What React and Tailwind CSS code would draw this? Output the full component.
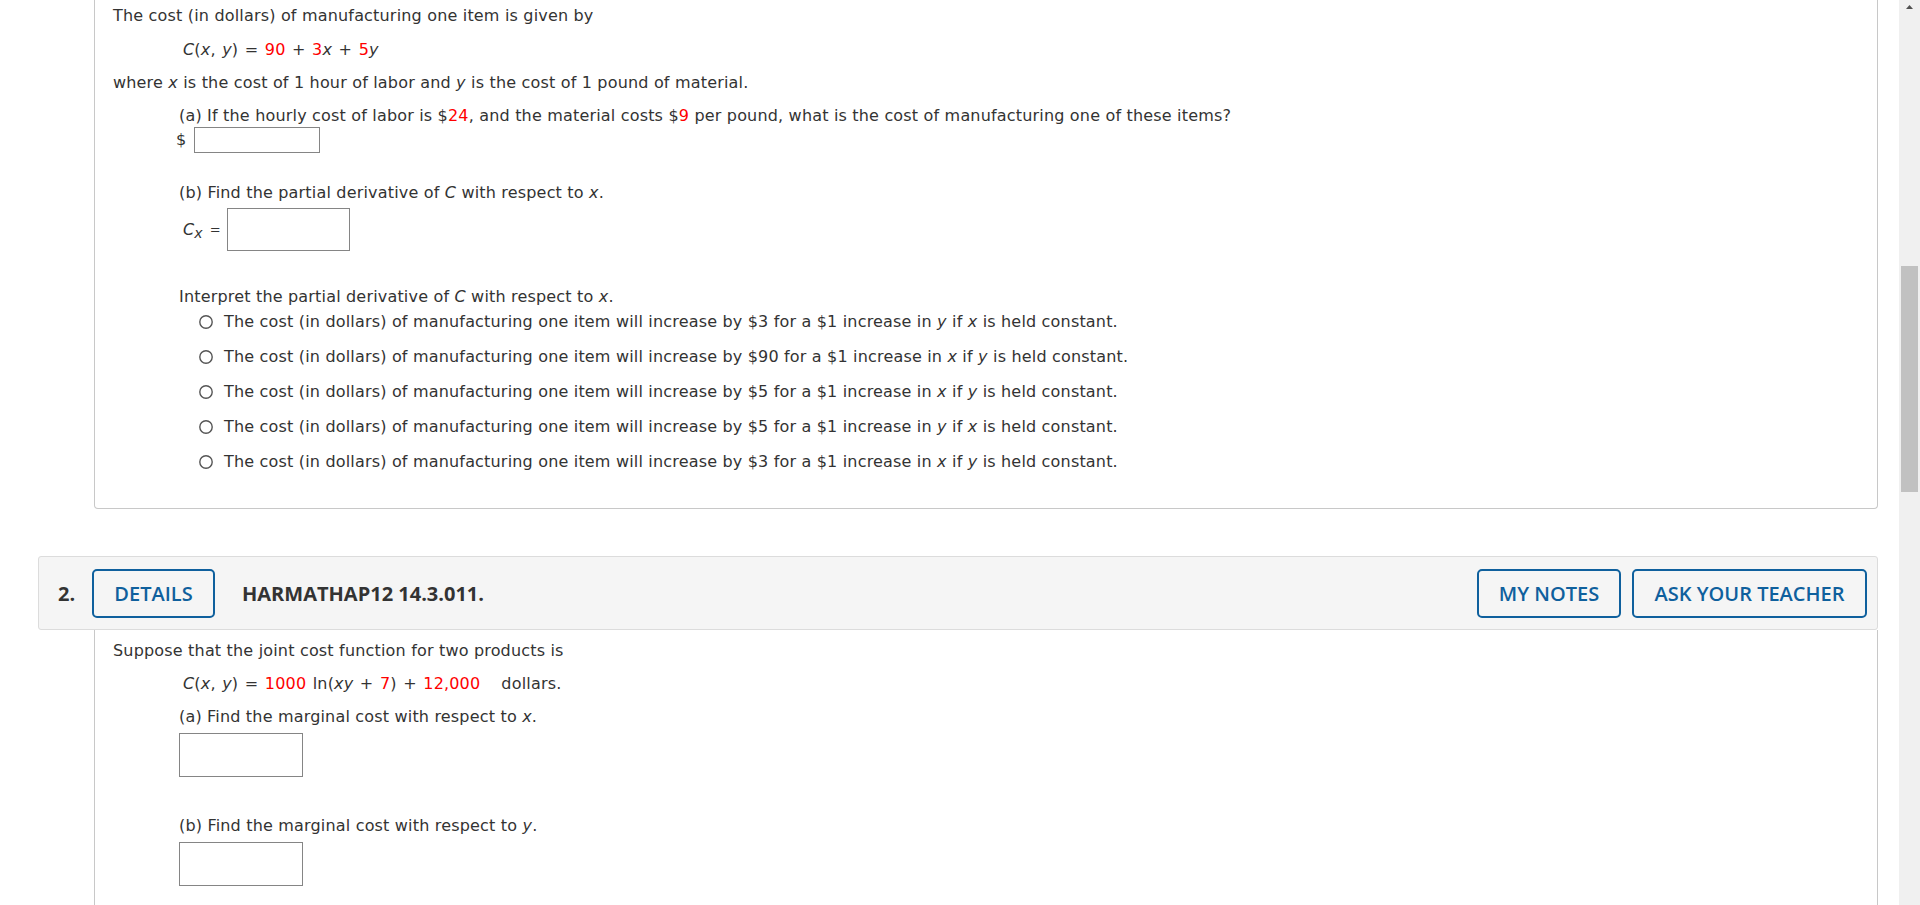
import React from "react";

const R = ({ children }) => <span className="text-[#ff0000]">{children}</span>;
const I = ({ children }) => <i className="italic">{children}</i>;

function Radio() {
  return (
    <svg width="14" height="14" viewBox="0 0 14 14" className="shrink-0">
      <circle cx="7" cy="7" r="6.2" fill="#fff" stroke="#555" strokeWidth="1.4" />
    </svg>
  );
}

function Option({ children }) {
  return (
    <div className="ml-[86px] flex items-center gap-[11px] leading-5 h-5">
      <Radio />
      <span>{children}</span>
    </div>
  );
}

function Btn({ w, children }) {
  return (
    <div
      className={`flex h-[49px] items-center justify-center rounded-[5px] border-2 border-[#0f609d] bg-transparent text-[20px] font-semibold text-[#0f609d] ${w}`}
    >
      {children}
    </div>
  );
}

export default function App() {
  return (
    <div className="flex h-[905px] w-[1920px] overflow-hidden bg-white font-['DejaVu_Sans',sans-serif] text-[16px] text-[#333]">
      <div className="flex-1 pl-[38px] pr-[21px]">
        {/* Question 1 body */}
        <div className="ml-[56px] rounded-b-[4px] border-x border-b border-[#c8c8c8] pl-[18px] pt-[6px] pb-[36px] leading-5 tracking-[0.18px]">
          <div>The cost (in dollars) of manufacturing one item is given by</div>
          <div className="mt-[14px] ml-[70px] [word-spacing:1.2px]">
            <I>C</I>(<I>x</I>, <I>y</I>) = <R>90</R> + <R>3</R><I>x</I> + <R>5</R><I>y</I>
          </div>
          <div className="mt-[13px]">
            where <I>x</I> is the cost of 1 hour of labor and <I>y</I> is the cost of 1 pound of material.
          </div>
          <div className="mt-[13px] ml-[66px]">
            (a) If the hourly cost of labor is $<R>24</R>, and the material costs $<R>9</R> per pound, what is the cost of manufacturing one of these items?
          </div>
          <div className="mt-[1px] ml-[63px] flex h-[26px] items-center">
            <span>$</span>
            <div className="ml-[8px] h-[26px] w-[126px] border border-[#858585] bg-white" />
          </div>
          <div className="mt-[30px] ml-[66px]">
            (b) Find the partial derivative of <I>C</I> with respect to <I>x</I>.
          </div>
          <div className="mt-[5px] ml-[70px] flex h-[43px] items-center">
            <span>
              <I>C</I>
              <sub className="text-[14px] italic">x</sub>
            </span>
            <span className="ml-[7px] text-[13px]">=</span>
            <div className="ml-[6px] h-[43px] w-[123px] border border-[#858585] bg-white" />
          </div>
          <div className="mt-[36px] ml-[66px]">
            Interpret the partial derivative of <I>C</I> with respect to <I>x</I>.
          </div>
          <div className="mt-[5px] flex flex-col gap-[15px]">
            <Option>
              The cost (in dollars) of manufacturing one item will increase by $3 for a $1 increase in <I>y</I> if <I>x</I> is held constant.
            </Option>
            <Option>
              The cost (in dollars) of manufacturing one item will increase by $90 for a $1 increase in <I>x</I> if <I>y</I> is held constant.
            </Option>
            <Option>
              The cost (in dollars) of manufacturing one item will increase by $5 for a $1 increase in <I>x</I> if <I>y</I> is held constant.
            </Option>
            <Option>
              The cost (in dollars) of manufacturing one item will increase by $5 for a $1 increase in <I>y</I> if <I>x</I> is held constant.
            </Option>
            <Option>
              The cost (in dollars) of manufacturing one item will increase by $3 for a $1 increase in <I>x</I> if <I>y</I> is held constant.
            </Option>
          </div>
        </div>

        {/* Question 2 header */}
        <div className="mt-[47px] flex items-center rounded-[3px] border border-[#dcdcdc] bg-[#f5f5f5] pl-[19px] pr-[10px] pt-[12px] pb-[11px] font-['Open_Sans',sans-serif]">
          <div className="w-[34px] text-[20px] font-bold text-[#333]">2.</div>
          <Btn w="w-[123px]">DETAILS</Btn>
          <div className="ml-[27px] text-[20px] font-bold text-[#333]">HARMATHAP12 14.3.011.</div>
          <div className="ml-auto flex gap-[11px]">
            <Btn w="w-[144px]">MY NOTES</Btn>
            <Btn w="w-[235px]">ASK YOUR TEACHER</Btn>
          </div>
        </div>

        {/* Question 2 body */}
        <div className="ml-[56px] h-[400px] border-x border-[#c8c8c8] pl-[18px] pt-[11px] leading-5 tracking-[0.18px]">
          <div>Suppose that the joint cost function for two products is</div>
          <div className="mt-[13px] ml-[70px] [word-spacing:1.2px]">
            <I>C</I>(<I>x</I>, <I>y</I>) = <R>1000</R> ln(<I>xy</I> + <R>7</R>) + <R>12,000</R>
            <span className="ml-[21px]">dollars.</span>
          </div>
          <div className="mt-[13px] ml-[66px]">
            (a) Find the marginal cost with respect to <I>x</I>.
          </div>
          <div className="mt-[6px] ml-[66px] h-[44px] w-[124px] border border-[#858585] bg-white" />
          <div className="mt-[39px] ml-[66px]">
            (b) Find the marginal cost with respect to <I>y</I>.
          </div>
          <div className="mt-[6px] ml-[66px] h-[44px] w-[124px] border border-[#858585] bg-white" />
        </div>
      </div>

      {/* Scrollbar */}
      <div className="relative w-[21px] bg-[#f0f0f0]">
        <svg width="21" height="14" viewBox="0 0 21 14" className="absolute left-0 top-0">
          <path d="M7 9 L10.5 5 L14 9 Z" fill="#505050" />
        </svg>
        <div className="absolute left-[2px] top-[266px] h-[226px] w-[17px] bg-[#c1c1c1]" />
      </div>
    </div>
  );
}
